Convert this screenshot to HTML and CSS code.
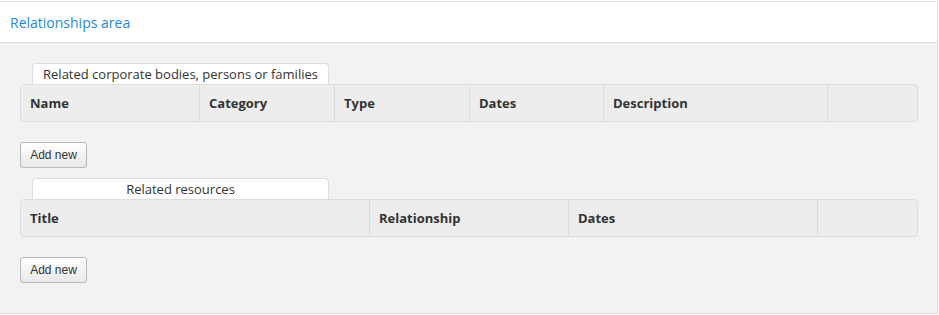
FILE: index.html
```html
<!DOCTYPE html>
<html>
<head>
<meta charset="utf-8">
<link rel="stylesheet" href="styles.css">
</head>
<body>
<section class="panel">
  <header class="panel-head">Relationships area</header>
  <div class="panel-body">
    <div class="group">
      <div class="tab">Related corporate bodies, persons or families</div>
      <div class="grid grid-agents">
        <div class="th">Name</div>
        <div class="th">Category</div>
        <div class="th">Type</div>
        <div class="th">Dates</div>
        <div class="th">Description</div>
        <div class="th"></div>
      </div>
      <button class="btn">Add new</button>
    </div>
    <div class="group">
      <div class="tab">Related resources</div>
      <div class="grid grid-resources">
        <div class="th">Title</div>
        <div class="th">Relationship</div>
        <div class="th">Dates</div>
        <div class="th"></div>
      </div>
      <button class="btn">Add new</button>
    </div>
  </div>
</section>
</body>
</html>
```
FILE: styles.css
```css
html, body {
  margin: 0;
  padding: 0;
  background: #ffffff;
}
body {
  padding-top: 1px;
  font-family: "Open Sans", "Liberation Sans", sans-serif;
}
.panel {
  width: 937px;
  border-top: 1px solid #dddddd;
  border-right: 1px solid #dddddd;
  border-bottom: 1px solid #dddddd;
  background: #f2f2f2;
}
.panel-head {
  height: 40px;
  background: #ffffff;
  border-bottom: 1px solid #dddddd;
  color: #1f8ad6;
  font-size: 14px;
  line-height: 42px;
  padding-left: 10px;
}
.panel-body {
  padding: 20px 20px 30px 20px;
}
.group + .group {
  margin-top: 10px;
}
.tab {
  margin-left: 12px;
  width: 295px;
  height: 20px;
  background: #ffffff;
  border: 1px solid #dddddd;
  border-bottom: none;
  border-radius: 4px 4px 0 0;
  text-align: center;
  font-size: 13px;
  line-height: 20px;
  color: #333333;
}
.grid {
  width: 896px;
  display: grid;
  background: #ededed;
  border: 1px solid #dddddd;
  border-radius: 4px;
}
.grid-agents {
  grid-template-columns: 178px 135px 135px 134px 224px 1fr;
}
.grid-resources {
  grid-template-columns: 348px 199px 249px 1fr;
}
.th {
  height: 36px;
  padding-left: 9px;
  font-size: 13px;
  font-weight: bold;
  line-height: 37px;
  color: #333333;
  border-left: 1px solid #dddddd;
}
.th:first-child {
  border-left: none;
}
.btn {
  display: block;
  margin-top: 20px;
  width: 67px;
  height: 26px;
  padding: 0;
  border: 1px solid #b8b8b8;
  border-radius: 3px;
  background: linear-gradient(#ffffff, #e8e8e8);
  font-family: "Liberation Sans", Arial, sans-serif;
  font-size: 12px;
  color: #333333;
}
```
